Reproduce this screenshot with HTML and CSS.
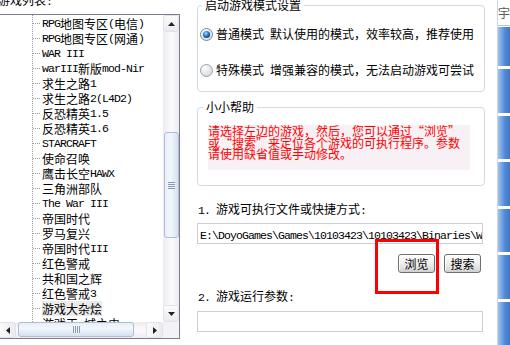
FILE: index.html
```html
<!DOCTYPE html>
<html lang="zh-CN">
<head>
<meta charset="utf-8">
<title>游戏设置</title>
<link rel="stylesheet" href="styles.css">
</head>
<body>
<div class="screen">
  <div class="left">
    <div class="list-label">游戏列表<span class="m">:</span></div>
    <div class="listbox">
      <div class="lb-main">
        <div class="tree">
          <div class="row"><span class="m">RPG</span>地图专区<span class="m">(</span>电信<span class="m">)</span></div>
          <div class="row"><span class="m">RPG</span>地图专区<span class="m">(</span>网通<span class="m">)</span></div>
          <div class="row"><span class="m">WAR III</span></div>
          <div class="row"><span class="m">warIII</span>新版<span class="m">mod-Nir</span></div>
          <div class="row">求生之路<span class="m">1</span></div>
          <div class="row">求生之路<span class="m">2(L4D2)</span></div>
          <div class="row">反恐精英<span class="m">1.5</span></div>
          <div class="row">反恐精英<span class="m">1.6</span></div>
          <div class="row"><span class="m">STARCRAFT</span></div>
          <div class="row">使命召唤</div>
          <div class="row">鹰击长空<span class="m">HAWX</span></div>
          <div class="row">三角洲部队</div>
          <div class="row"><span class="m">The War III</span></div>
          <div class="row">帝国时代</div>
          <div class="row">罗马复兴</div>
          <div class="row">帝国时代<span class="m">III</span></div>
          <div class="row">红色警戒</div>
          <div class="row">共和国之辉</div>
          <div class="row">红色警戒<span class="m">3</span></div>
          <div class="row"><span class="sel">游戏大杂烩</span></div>
          <div class="row">游戏王<span class="m"> </span>城之史</div>
        </div>
        <div class="vscroll">
          <div class="sb-btn"><svg width="7" height="4" viewBox="0 0 7 4"><path d="M3.5 0 L7 4 L0 4 Z" fill="#222"/></svg></div>
          <div class="vtrack"><div class="vthumb"><span class="grip-h"></span></div></div>
          <div class="sb-btn"><svg width="7" height="4" viewBox="0 0 7 4"><path d="M0 0 L7 0 L3.5 4 Z" fill="#222"/></svg></div>
        </div>
      </div>
      <div class="hrow">
        <div class="hscroll">
          <div class="sb-btn h"><svg width="4" height="7" viewBox="0 0 4 7"><path d="M4 0 L4 7 L0 3.5 Z" fill="#222"/></svg></div>
          <div class="htrack"><div class="hthumb"><span class="grip-v"></span></div></div>
          <div class="sb-btn h"><svg width="4" height="7" viewBox="0 0 4 7"><path d="M0 0 L4 3.5 L0 7 Z" fill="#222"/></svg></div>
        </div>
        <div class="corner"></div>
      </div>
    </div>
  </div>

  <div class="right">
    <div class="group g1">
      <div class="legend">启动游戏模式设置</div>
      <div class="radio-row r1">
        <svg width="13" height="13" viewBox="0 0 13 13">
          <defs>
            <radialGradient id="rf1" cx="0.35" cy="0.3" r="0.8"><stop offset="0" stop-color="#ffffff"/><stop offset="1" stop-color="#d5dae3"/></radialGradient>
            <radialGradient id="rd1" cx="0.4" cy="0.35" r="0.7"><stop offset="0" stop-color="#a8dcff"/><stop offset="0.5" stop-color="#2b7fd2"/><stop offset="1" stop-color="#0c3c78"/></radialGradient>
          </defs>
          <circle cx="6.5" cy="6.5" r="6" fill="url(#rf1)" stroke="#7b8898"/>
          <circle cx="6.5" cy="6.5" r="3.6" fill="url(#rd1)"/>
        </svg>
        <span>普通模式<span class="m"> </span>默认使用的模式，效率较高，推荐使用</span>
      </div>
      <div class="radio-row r2">
        <svg width="13" height="13" viewBox="0 0 13 13">
          <defs>
            <radialGradient id="rf2" cx="0.35" cy="0.3" r="0.8"><stop offset="0" stop-color="#ffffff"/><stop offset="1" stop-color="#cfd3da"/></radialGradient>
          </defs>
          <circle cx="6.5" cy="6.5" r="6" fill="url(#rf2)" stroke="#9aa1ab"/>
        </svg>
        <span>特殊模式<span class="m"> </span>增强兼容的模式，无法启动游戏可尝试</span>
      </div>
    </div>

    <div class="group g2">
      <div class="legend">小小帮助</div>
      <div class="help">请选择左边的游戏，然后，您可以通过“浏览”<br>或“搜索”来定位各个游戏的可执行程序。参数<br>请使用缺省值或手动修改。</div>
    </div>

    <div class="field-label l1"><span class="m">1. </span>游戏可执行文件或快捷方式<span class="m">:</span></div>
    <div class="textbox t1"><span class="m">E:\DoyoGames\Games\10103423\10103423\Binaries\Win32</span></div>
    <div class="btn-row">
      <div class="btn">浏览</div>
      <div class="btn">搜索</div>
    </div>
    <div class="field-label l2"><span class="m">2. </span>游戏运行参数<span class="m">:</span></div>
    <div class="textbox t2"></div>
  </div>

  <div class="strip">
    <div class="strip-line"></div>
    <div class="strip-gap"></div>
    <div class="strip-win">
      <div class="strip-top">宇</div>
      <div class="strip-blk b1"></div>
      <div class="strip-blk b2"></div>
      <div class="strip-blk b3"></div>
      <div class="strip-blk b4"></div>
      <div class="strip-blk b5"></div>
      <div class="strip-blk b6"></div>
      <div class="strip-blk b7"></div>
    </div>
  </div>

  <div class="annot"></div>
</div>
</body>
</html>
```
FILE: styles.css
```css
* { box-sizing: border-box; margin: 0; padding: 0; }
html, body { width: 510px; height: 345px; overflow: hidden; background: #fff; }
body {
  font-family: "Noto Sans CJK SC", sans-serif;
  font-size: 12px;
  color: #000;
  line-height: 15px;
}
.m {
  font-family: "Liberation Mono", "Noto Sans CJK SC", monospace;
  font-size: 11.5px;
  letter-spacing: -0.9px;
  white-space: pre;
}
.screen { position: relative; display: flex; width: 510px; height: 345px; overflow: hidden; }

/* left list */
.left { flex: none; width: 182px; margin-left: -2px; display: flex; flex-direction: column; }
.list-label { margin-top: -6px; height: 20px; line-height: 12px; white-space: nowrap; }
.listbox { height: 325px; border: 1px solid #7d7b8c; display: flex; flex-direction: column; background: #fff; }
.lb-main { display: flex; height: 307px; }
.tree {
  flex: 1; overflow: hidden; padding-top: 1px;
  background: repeating-linear-gradient(to bottom, #9a9a9a 0 1px, transparent 1px 2px) 33px 0 / 1px 100% no-repeat;
}
.row { display: flex; align-items: center; height: 15px; white-space: nowrap; }
.row::before {
  content: ""; flex: none; width: 7px; height: 1px; margin: 0 2px 0 34px;
  background: repeating-linear-gradient(to right, #9a9a9a 0 1px, transparent 1px 2px);
}
.sel { background: #ebebeb; line-height: 15px; }

.vscroll { width: 16px; display: flex; flex-direction: column; }
.sb-btn {
  flex: none; height: 17px; display: flex; align-items: center; justify-content: center;
  border: 1px solid #e3e1ea; border-radius: 2px;
  background: linear-gradient(to bottom, #fbfbfd, #ebeaf0);
}
.sb-btn.h { width: 17px; height: 16px; background: linear-gradient(to right, #fbfbfd, #ebeaf0); }
.vtrack {
  flex: 1; padding-top: 100px;
  background: linear-gradient(to right, #ecebf0, #f9f8fb 45%, #f9f8fb 60%, #ecebf0);
}
.vthumb {
  height: 106px; margin: 0 0 0 1px; width: 15px;
  border: 1px solid #b0bdd2; border-radius: 3px;
  background: linear-gradient(to right, #e6eefa, #f4f7fc 40%, #d5e1f2);
  display: flex; align-items: center; justify-content: center;
}
.grip-h {
  width: 7px; height: 7px;
  background: repeating-linear-gradient(to bottom, #8a9bb8 0 1px, #eef3fb 1px 2px);
}
.hrow { display: flex; height: 16px; }
.hscroll { width: 164px; display: flex; }
.htrack {
  flex: 1; padding-left: 2px;
  background: linear-gradient(to bottom, #ecebf0, #f9f8fb 45%, #f9f8fb 60%, #ecebf0);
}
.hthumb {
  width: 116px; height: 15px; margin-top: 0;
  border: 1px solid #b0bdd2; border-radius: 3px;
  background: linear-gradient(to bottom, #e6eefa, #f4f7fc 40%, #d5e1f2);
  display: flex; align-items: center; justify-content: center;
}
.grip-v {
  width: 7px; height: 7px;
  background: repeating-linear-gradient(to right, #8a9bb8 0 1px, #eef3fb 1px 2px);
}
.corner { width: 16px; background: #f3f2f6; }

/* right panel */
.right { flex: none; width: 317px; padding-left: 17px; display: flex; flex-direction: column; }
.group { width: 288px; border: 1px solid #d3d9e3; border-radius: 4px; background: #fff; }
.g1 { margin-top: 5px; height: 87px; }
.g2 { margin-top: 15px; height: 79px; }
.legend {
  width: fit-content; height: 12px; line-height: 12px;
  margin: -7px 0 0 4px; padding: 0 3px; background: #fff; white-space: nowrap;
}
.g2 .legend { margin-left: 5px; }
.radio-row { display: flex; align-items: center; gap: 3px; height: 16px; margin-left: 2px; white-space: nowrap; }
.radio-row svg { flex: none; }
.r1 { margin-top: 15px; }
.r2 { margin-top: 20px; }
.help {
  margin: 12px 0 0 10px; width: 262px; height: 45px;
  background: #f7f1f5; color: #ff0000;
  line-height: 11.5px; white-space: nowrap;
}
.field-label { height: 14px; line-height: 14px; margin-left: 1px; white-space: nowrap; }
.l1 { margin-top: 16px; }
.l2 { margin-top: 16px; }
.textbox {
  width: 286px; height: 21px; border: 1px solid #c9cfd9; background: #fff;
  padding-left: 2px; line-height: 19px; overflow: hidden; white-space: nowrap;
}
.t1 { margin-top: 7px; }
.t2 { margin-top: 8px; }
.btn-row { width: 286px; height: 19px; margin-top: 10px; padding-right: 2px; display: flex; justify-content: flex-end; gap: 9px; }
.btn {
  width: 37px; height: 19px; line-height: 17px; text-align: center;
  border: 1px solid #6f6f6f; border-radius: 3px;
  background: linear-gradient(to bottom, #ffffff, #efefef 45%, #dcdcdc 85%, #cfcfcf);
  box-shadow: inset 1px 1px 0 #ffffff;
}

/* window behind at right edge */
.strip { flex: none; width: 13px; display: flex; }
.strip-line { width: 2px; background: #7c7c7c; }
.strip-gap { width: 3px; background: #f1f1f1; }
.strip-win { flex: 1; display: flex; flex-direction: column; border-left: 1px solid #c9d6e8; }
.strip-top { height: 26px; line-height: 26px; color: #5a5a5a; font-size: 12px; overflow: hidden; white-space: nowrap; border-bottom: 1px solid #a9c6ee; }
.strip-blk { height: 44px; margin-top: 3px; background: linear-gradient(to right, #9fc3f0, #4f88d6 60%, #3f78c8); }
.b1 { margin-top: 1px; height: 40px; }
.annot {
  position: absolute; left: 375px; top: 239px; width: 64px; height: 55px;
  border: 3px solid #ff0000;
}
```
